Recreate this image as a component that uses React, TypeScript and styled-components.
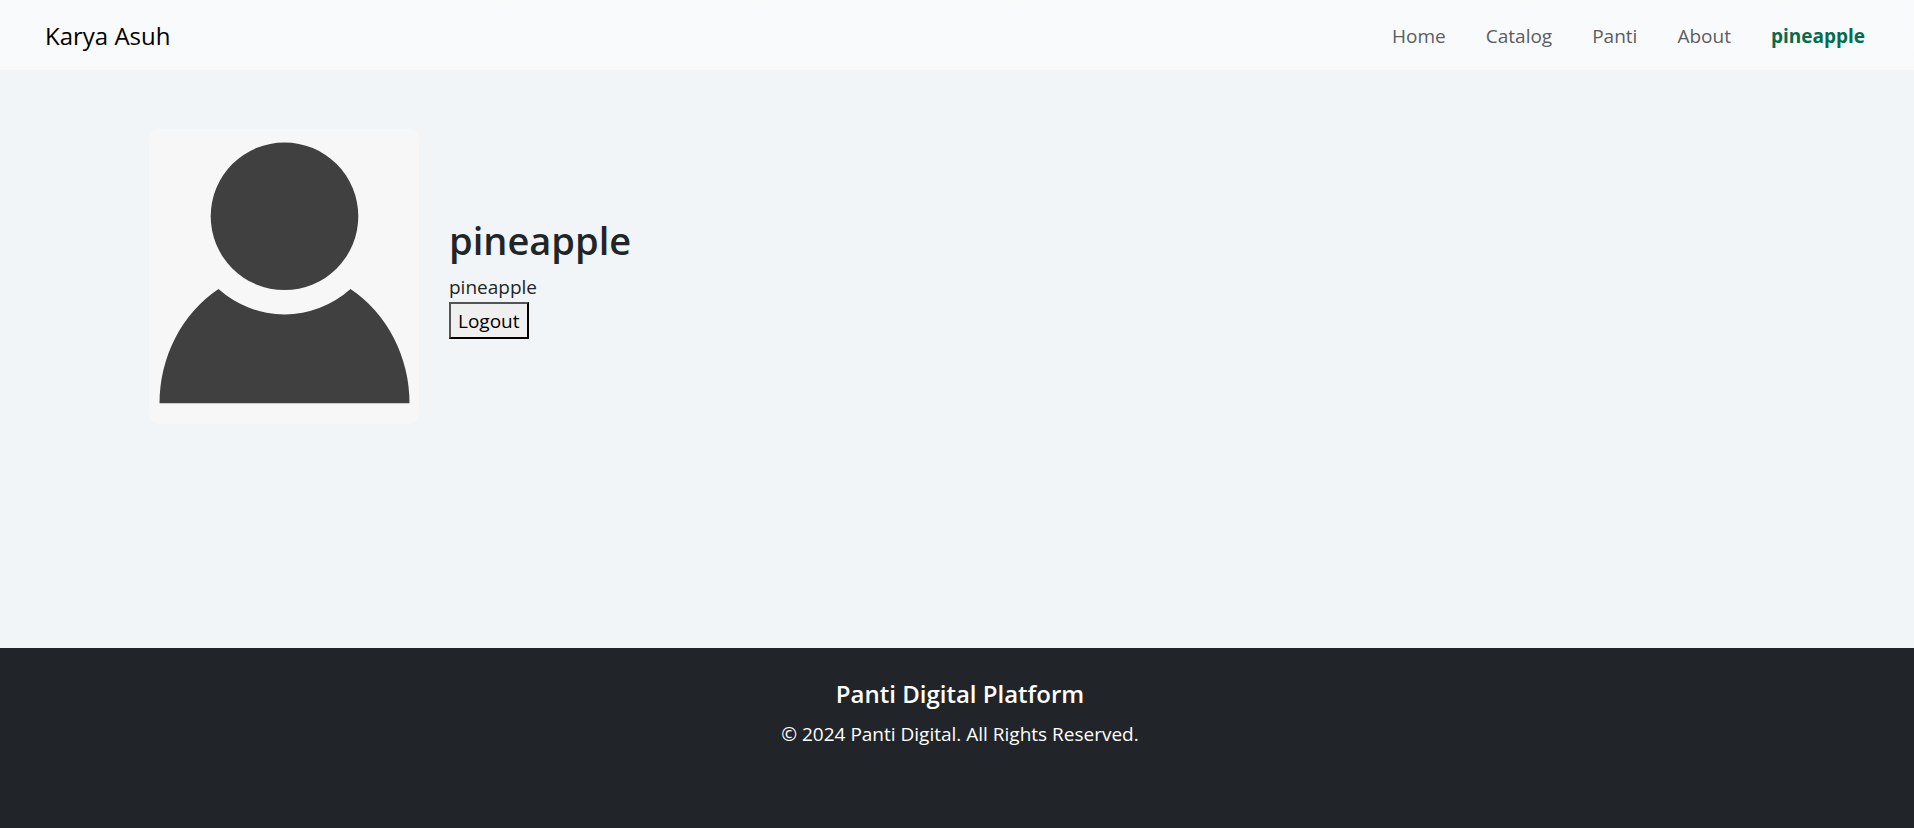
import React from "react";
import styled, { createGlobalStyle } from "styled-components";

const GlobalStyle = createGlobalStyle`
  *, *::before, *::after { box-sizing: border-box; }
  body {
    margin: 0;
    background: #f1f5f8;
    color: #212529;
    font-family: "Segoe UI", "Open Sans", "Noto Sans", sans-serif;
    font-size: 19px;
    line-height: 30px;
  }
`;

const Page = styled.div`
  display: flex;
  flex-direction: column;
  min-height: 100vh;
`;

const Navbar = styled.header`
  display: flex;
  align-items: center;
  justify-content: space-between;
  height: 70px;
  padding: 2px 49px 0 45px;
  background: linear-gradient(180deg, #f9fbfb, #f8f9fb);
`;

const Brand = styled.a`
  color: #000;
  font-size: 24px;
  text-decoration: none;
`;

const NavLinks = styled.nav`
  display: flex;
  gap: 40px;
`;

const NavLink = styled.a<{ $active?: boolean }>`
  color: ${(p) => (p.$active ? "#046c4e" : "#5b5d5f")};
  font-weight: ${(p) => (p.$active ? 700 : 400)};
  text-decoration: none;
`;

const Profile = styled.main`
  display: flex;
  flex: 1;
  align-items: flex-start;
  padding: 59px 149px;
`;

const ProfileRow = styled.section`
  display: flex;
  align-items: center;
  gap: 30px;
`;

const Avatar = styled.svg`
  display: block;
  width: 270px;
  height: 295px;
  border-radius: 10px;
  background: #f7f7f7;
  fill: #404040;
`;

const Details = styled.div`
  display: flex;
  flex-direction: column;
  align-items: flex-start;
  padding-top: 2px;
`;

const Name = styled.h1`
  margin: 0 0 8px;
  font-size: 38px;
  font-weight: 600;
  line-height: 48px;
`;

const Username = styled.p`
  margin: 0;
`;

const LogoutButton = styled.button`
  height: 37px;
  padding: 0 7px;
  border: 2px outset #000;
  background: #efefef;
  color: #000;
  font: inherit;
`;

const Footer = styled.footer`
  height: 180px;
  padding: 31px 0 29px 6px;
  background: #212529;
  color: #fff;
  text-align: center;
`;

const FooterTitle = styled.h2`
  margin: 0 0 10px;
  font-size: 24px;
  font-weight: 600;
  line-height: 30px;
`;

const Copyright = styled.p`
  margin: 0;
`;

const links = ["Home", "Catalog", "Panti", "About"];

export default function App() {
  return (
    <Page>
      <GlobalStyle />
      <Navbar>
        <Brand href="#">Karya Asuh</Brand>
        <NavLinks>
          {links.map((label) => (
            <NavLink key={label} href="#">{label}</NavLink>
          ))}
          <NavLink href="#" $active>pineapple</NavLink>
        </NavLinks>
      </Navbar>
      <Profile>
        <ProfileRow>
          <Avatar viewBox="0 0 270 295" role="img" aria-label="Profile picture">
            <circle cx="135.5" cy="87.3" r="73.8" />
            <path d="M10.5 274.3A125 134.6 0 0 1 69.5 160A98.4 98.4 0 0 0 201.5 160A125 134.6 0 0 1 260.5 274.3Z" />
          </Avatar>
          <Details>
            <Name>pineapple</Name>
            <Username>pineapple</Username>
            <LogoutButton type="button">Logout</LogoutButton>
          </Details>
        </ProfileRow>
      </Profile>
      <Footer>
        <FooterTitle>Panti Digital Platform</FooterTitle>
        <Copyright>© 2024 Panti Digital. All Rights Reserved.</Copyright>
      </Footer>
    </Page>
  );
}
